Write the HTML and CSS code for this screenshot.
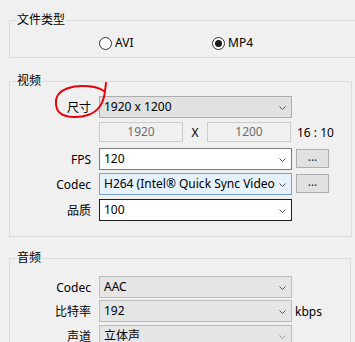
FILE: index.html
```html
<!DOCTYPE html>
<html>
<head>
<meta charset="utf-8">
<link rel="stylesheet" href="styles.css">
</head>
<body>
<fieldset class="group g-type">
  <legend>文件类型</legend>
  <div class="radio-row">
    <label class="radio opt-first"><span class="dot"></span>AVI</label>
    <label class="radio"><span class="dot checked"></span>MP4</label>
  </div>
</fieldset>

<fieldset class="group g-video">
  <legend>视频</legend>
  <div class="row r-size">
    <span class="lbl">尺寸</span>
    <div class="combo gray"><span class="val">1920 x 1200</span><span class="arrow"><svg width="7" height="4" viewBox="0 0 7 4"><path d="M0.5 0.5 L3.5 3.5 L6.5 0.5" fill="none" stroke="#555" stroke-width="1"/></svg></span></div>
  </div>
  <div class="row r-dims">
    <span class="lbl"></span>
    <div class="num">1920</div>
    <span class="times">X</span>
    <div class="num">1200</div>
    <span class="ratio">16 : 10</span>
  </div>
  <div class="row r-fps">
    <span class="lbl">FPS</span>
    <div class="combo white"><span class="val">120</span><span class="arrow"><svg width="7" height="4" viewBox="0 0 7 4"><path d="M0.5 0.5 L3.5 3.5 L6.5 0.5" fill="none" stroke="#555" stroke-width="1"/></svg></span></div>
    <div class="btn">...</div>
  </div>
  <div class="row r-codec">
    <span class="lbl">Codec</span>
    <div class="combo blue"><span class="val">H264 (Intel® Quick Sync Video)</span><span class="arrow"><svg width="7" height="4" viewBox="0 0 7 4"><path d="M0.5 0.5 L3.5 3.5 L6.5 0.5" fill="none" stroke="#555" stroke-width="1"/></svg></span></div>
    <div class="btn">...</div>
  </div>
  <div class="row r-q">
    <span class="lbl">品质</span>
    <div class="combo black"><span class="val">100</span><span class="arrow"><svg width="7" height="4" viewBox="0 0 7 4"><path d="M0.5 0.5 L3.5 3.5 L6.5 0.5" fill="none" stroke="#555" stroke-width="1"/></svg></span></div>
  </div>
</fieldset>

<fieldset class="group g-audio">
  <legend>音频</legend>
  <div class="row a-codec">
    <span class="lbl">Codec</span>
    <div class="combo light"><span class="val">AAC</span><span class="arrow"><svg width="7" height="4" viewBox="0 0 7 4"><path d="M0.5 0.5 L3.5 3.5 L6.5 0.5" fill="none" stroke="#555" stroke-width="1"/></svg></span></div>
  </div>
  <div class="row a-rate">
    <span class="lbl">比特率</span>
    <div class="combo light"><span class="val">192</span><span class="arrow"><svg width="7" height="4" viewBox="0 0 7 4"><path d="M0.5 0.5 L3.5 3.5 L6.5 0.5" fill="none" stroke="#555" stroke-width="1"/></svg></span></div>
    <span class="unit">kbps</span>
  </div>
  <div class="row a-ch">
    <span class="lbl">声道</span>
    <div class="combo light"><span class="val">立体声</span><span class="arrow"><svg width="7" height="4" viewBox="0 0 7 4"><path d="M0.5 0.5 L3.5 3.5 L6.5 0.5" fill="none" stroke="#999" stroke-width="1"/></svg></span></div>
  </div>
</fieldset>

<svg class="annot" width="355" height="342" viewBox="0 0 355 342">
  <path d="M106,84 L105,92 C104,102 100,112 88,116 C80,119 66,119 60,114 C55,110 55,100 58,96 C62,90 72,87 82,87 C92,87 100,89 104,92" fill="none" stroke="#e8000b" stroke-width="2" stroke-linecap="round" stroke-linejoin="round"/>
</svg>
</body>
</html>
```

FILE: styles.css
```css
html, body {
  margin: 0;
  padding: 0;
  background: #f0f0f0;
  overflow: hidden;
  height: 100%;
}
body {
  font-family: "Noto Sans", "Noto Sans CJK SC", sans-serif;
  font-size: 12px;
  color: #000;
  position: relative;
  padding-top: 1px;
  margin-top: -1px;
}
.group {
  margin: 0 0 0 9px;
  padding: 0;
  border: 1px solid #dcdcdc;
  min-width: 0;
  box-sizing: border-box;
}
.group legend {
  margin-left: 6px;
  padding: 0 1px;
  line-height: 16px;
  height: 16px;
}
.g-type {
  margin-top: 12px;
  width: 360px;
  padding-bottom: 4px;
}
.g-video {
  margin-top: 15px;
  width: 343px;
  padding-bottom: 15px;
}
.g-audio {
  margin-top: 13px;
  width: 342px;
  height: 200px;
}
.radio-row {
  margin-top: 5px;
  height: 20px;
  display: flex;
  align-items: center;
  padding-left: 89px;
}
.radio {
  display: flex;
  align-items: center;
  gap: 3px;
  line-height: 16px;
}
.opt-first {
  width: 113px;
}
.dot {
  width: 13px;
  height: 13px;
  box-sizing: border-box;
  border: 1px solid #333;
  border-radius: 50%;
  background: #fff;
  display: flex;
  align-items: center;
  justify-content: center;
}
.dot.checked::after {
  content: "";
  width: 7px;
  height: 7px;
  border-radius: 50%;
  background: #1a1a1a;
}
.row {
  display: flex;
  align-items: center;
  height: 22px;
}
.lbl {
  width: 81px;
  flex: none;
  text-align: right;
  margin-right: 8px;
}
.r-size { margin-top: 7px; }
.r-dims { margin-top: 4px; height: 20px; }
.r-fps { margin-top: 6px; }
.r-codec { margin-top: 3px; }
.r-q { margin-top: 4px; }
.a-codec { margin-top: 10px; }
.a-rate { margin-top: 2px; }
.a-ch { margin-top: 3px; }

.combo {
  width: 193px;
  height: 22px;
  box-sizing: border-box;
  border: 1px solid #adadad;
  display: flex;
  align-items: center;
  flex: none;
}
.combo .val {
  flex: 1;
  min-width: 0;
  overflow: hidden;
  white-space: nowrap;
  padding-left: 4px;
  line-height: 20px;
}
.combo .arrow {
  width: 15px;
  flex: none;
  display: flex;
  justify-content: center;
  padding-top: 1px;
  padding-right: 1px;
}
.combo.gray { background: #e1e1e1; border-color: #adadad; }
.combo.white { background: #fff; border-color: #7a7a7a; }
.combo.blue { background: #e5f1fb; border-color: #7ba2c8; }
.combo.black { background: #fff; border-color: #1e1e1e; }
.combo.light { background: #e5e5e5; border-color: #bcbcbc; }

.num {
  width: 84px;
  height: 20px;
  box-sizing: border-box;
  border: 1px solid #cccccc;
  background: #f0f0f0;
  color: #6d6d6d;
  text-align: center;
  line-height: 18px;
  flex: none;
}
.times {
  width: 24px;
  text-align: center;
  flex: none;
}
.ratio {
  margin-left: 6px;
}
.btn {
  width: 33px;
  height: 19px;
  box-sizing: border-box;
  border: 1px solid #adadad;
  background: #e1e1e1;
  margin-left: 4px;
  align-self: flex-start;
  margin-top: 1px;
  text-align: center;
  line-height: 14px;
  color: #1a2a6a;
  flex: none;
}
.unit {
  margin-left: 3px;
}
.annot {
  position: absolute;
  left: 0;
  top: 0;
  pointer-events: none;
}
```
